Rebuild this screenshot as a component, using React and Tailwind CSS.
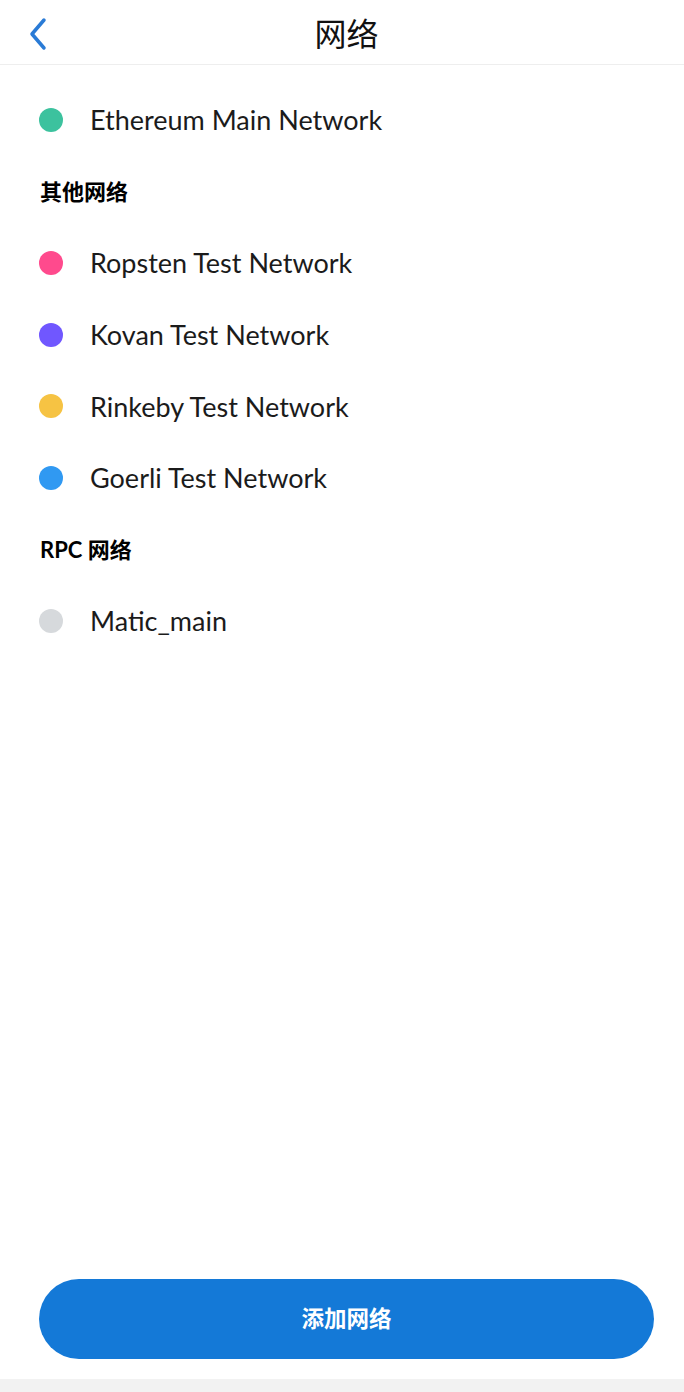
import React from "react";

const font = { fontFamily: "Lato, 'Noto Sans CJK SC', sans-serif" };

function Row({ color, label }) {
  return (
    <div className="flex h-[71.6px] items-center pl-[39px]">
      <span className="h-[24px] w-[24px] shrink-0 rounded-full" style={{ backgroundColor: color }} />
      <span className="ml-[27px] text-[27px] leading-none text-[#1b1b1b]">{label}</span>
    </div>
  );
}

function Section({ title }) {
  return (
    <div className="flex h-[71.6px] items-center pl-[40px] text-[22px] font-bold text-black">
      {title}
    </div>
  );
}

export default function App() {
  return (
    <div className="flex h-[1392px] w-[684px] flex-col bg-white" style={font}>
      <header className="relative flex h-[65px] shrink-0 items-center justify-center border-b border-[#eeeeee] pl-[9px]">
        <svg className="absolute left-[26px] top-[17px]" width="24" height="34" viewBox="0 0 24 34" fill="none">
          <path d="M18 3 L6 17 L18 31" stroke="#2a7bd6" strokeWidth="3.5" strokeLinecap="round" strokeLinejoin="round" />
        </svg>
        <h1 className="text-[32px] font-normal text-[#111]" style={{ fontFamily: "'Noto Sans CJK SC', sans-serif" }}>网络</h1>
      </header>
      <main className="flex flex-1 flex-col pt-[19px]">
        <Row color="#3cc29e" label="Ethereum Main Network" />
        <Section title="其他网络" />
        <Row color="#ff4a8d" label="Ropsten Test Network" />
        <Row color="#7057ff" label="Kovan Test Network" />
        <Row color="#f6c343" label="Rinkeby Test Network" />
        <Row color="#3099f2" label="Goerli Test Network" />
        <Section title="RPC 网络" />
        <Row color="#d6d9dc" label="Matic_main" />
      </main>
      <div className="flex shrink-0 justify-center pl-[39px] pr-[30px] pb-[20px]">
        <button className="flex h-[80px] w-full items-center justify-center rounded-full bg-[#1479d7] text-[22.5px] font-bold text-white">
          添加网络
        </button>
      </div>
      <div className="h-[13px] shrink-0 bg-[#f2f2f2]" />
    </div>
  );
}
